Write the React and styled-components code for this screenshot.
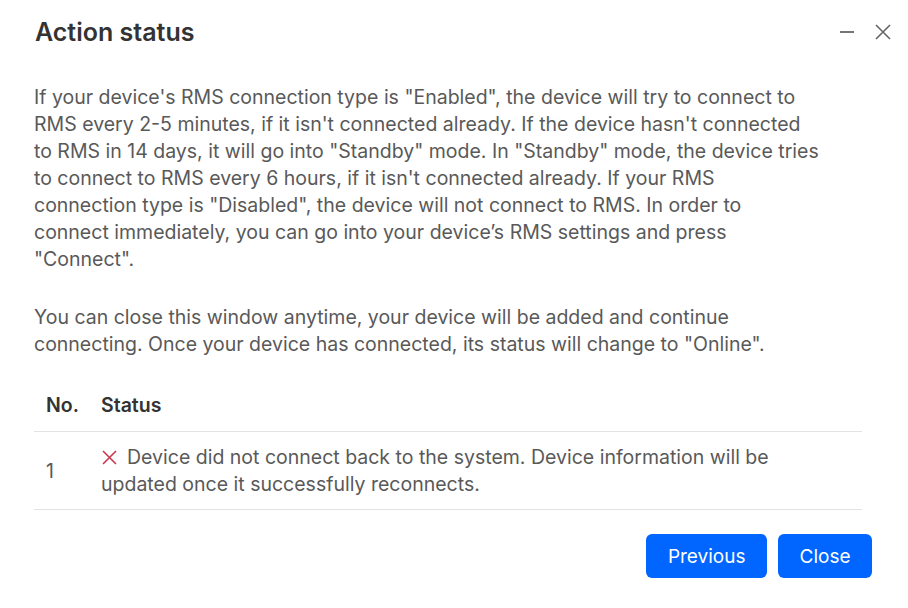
import React from "react";
import styled, { createGlobalStyle } from "styled-components";

const Global = createGlobalStyle`
  html, body { margin: 0; padding: 0; background: #fff; }
  body { font-family: Inter, "Noto Sans", sans-serif; -webkit-font-smoothing: antialiased; }
  * { box-sizing: border-box; }
`;

const Dialog = styled.div`
  width: 908px;
  height: 608px;
  background: #fff;
  display: flex;
  flex-direction: column;
`;

const Header = styled.div`
  display: flex;
  align-items: center;
  padding: 16px 14px 0 35px;
  height: 48px;
`;

const Title = styled.h2`
  margin: 0;
  flex: 1;
  font-size: 25px;
  line-height: 32px;
  font-weight: 600;
  color: #333;
`;

const HeaderActions = styled.div`
  display: flex;
  align-items: center;
  gap: 14px;
`;

const IconButton = styled.button`
  width: 22px;
  height: 22px;
  padding: 0;
  border: 0;
  background: none;
  display: flex;
  align-items: center;
  justify-content: center;
  color: #666;
  cursor: pointer;
`;

const Body = styled.div`
  padding: 36px 46px 0 34px;
`;

const Paragraph = styled.p`
  margin: 0 0 ${(p) => p.$gap || 0}px;
  max-width: 786px;
  font-size: 19.5px;
  line-height: 27px;
  color: #595959;
`;

const Table = styled.table`
  width: 100%;
  margin-top: 22px;
  border-collapse: collapse;
  font-size: 19.5px;
  line-height: 27px;
`;

const Th = styled.th`
  text-align: left;
  font-weight: 600;
  color: #333;
  padding: 12px 0 12px 12px;
  width: ${(p) => p.$w || "auto"};
  border-bottom: 1px solid #e3e3e3;
`;

const Td = styled.td`
  padding: 12px 30px 11px 12px;
  color: #595959;
  vertical-align: middle;
  border-bottom: 1px solid #e3e3e3;
`;

const StatusIcon = styled.svg`
  display: inline-block;
  vertical-align: -1px;
  margin: 0 10px 0 1px;
`;

const Footer = styled.div`
  display: flex;
  justify-content: flex-end;
  gap: 11px;
  padding: 24px 36px 0 0;
`;

const Button = styled.button`
  height: 44px;
  padding: 0 21.5px;
  border: 0;
  border-radius: 6px;
  background: #0066ff;
  color: #fff;
  font-family: Inter, "Noto Sans", sans-serif;
  font-size: 19px;
  cursor: pointer;
`;

export default function App() {
  return (
    <>
      <Global />
      <Dialog>
        <Header>
          <Title>Action status</Title>
          <HeaderActions>
            <IconButton aria-label="Minimize">
              <svg width="16" height="16" viewBox="0 0 16 16">
                <line x1="1" y1="8" x2="15" y2="8" stroke="currentColor" strokeWidth="1.8" />
              </svg>
            </IconButton>
            <IconButton aria-label="Close">
              <svg width="16" height="16" viewBox="0 0 16 16">
                <path d="M1 1 L15 15 M15 1 L1 15" stroke="currentColor" strokeWidth="1.6" fill="none" />
              </svg>
            </IconButton>
          </HeaderActions>
        </Header>
        <Body>
          <Paragraph $gap={31}>
            If your device's RMS connection type is "Enabled", the device will try to connect to
            RMS every 2-5 minutes, if it isn't connected already. If the device hasn't connected
            to RMS in 14 days, it will go into "Standby" mode. In "Standby" mode, the device tries
            to connect to RMS every 6 hours, if it isn't connected already. If your RMS
            connection type is "Disabled", the device will not connect to RMS. In order to
            connect immediately, you can go into your device’s RMS settings and press
            "Connect".
          </Paragraph>
          <Paragraph>
            You can close this window anytime, your device will be added and continue
            connecting. Once your device has connected, its status will change to "Online".
          </Paragraph>
          <Table>
            <thead>
              <tr>
                <Th $w="55px">No.</Th>
                <Th>Status</Th>
              </tr>
            </thead>
            <tbody>
              <tr>
                <Td>1</Td>
                <Td>
                  <StatusIcon width="15" height="15" viewBox="0 0 15 15">
                    <path d="M1 1 L14 14 M14 1 L1 14" stroke="#c8394f" strokeWidth="1.6" fill="none" />
                  </StatusIcon>
                  Device did not connect back to the system. Device information will be
                  updated once it successfully reconnects.
                </Td>
              </tr>
            </tbody>
          </Table>
        </Body>
        <Footer>
          <Button>Previous</Button>
          <Button>Close</Button>
        </Footer>
      </Dialog>
    </>
  );
}
